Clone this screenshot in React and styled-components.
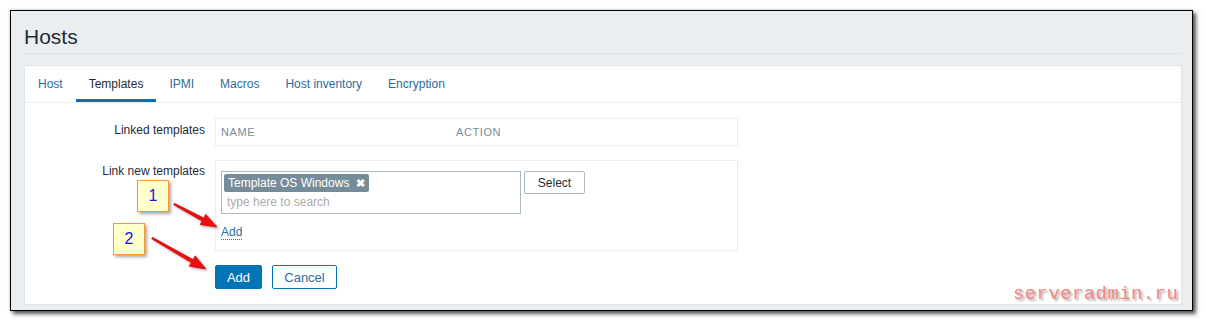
import React from 'react'
import styled, {createGlobalStyle} from 'styled-components'

const GlobalStyle = createGlobalStyle`
  body {
    margin: 0;
    background: #fff;
    font-family: 'Liberation Sans', Arial, sans-serif;
    font-size: 12px;
    color: #1f2c33;
  }
`

const Page = styled.div`
  position: relative;
  width: 1205px;
  height: 323px;
  overflow: hidden;
`

const Frame = styled.div`
  margin: 10px 0 0 10px;
  width: 1183px;
  box-sizing: border-box;
  background: #ebeef0;
  border: 1px solid #000;
  box-shadow: 3px 3px 4px rgba(0, 0, 0, 0.65), 0 0 3px rgba(0, 0, 0, 0.2);
  padding: 0 10px 5px 13px;
`

const Header = styled.h1`
  margin: 0;
  padding-top: 10px;
  font-size: 21px;
  line-height: 32px;
  font-weight: normal;
  color: #1f2c33;
  border-bottom: 1px solid #dde2e6;
`

const Panel = styled.div`
  margin-top: 11px;
  background: #fff;
  border: 1px solid #dfe4e7;
`

const TabBar = styled.div`
  display: flex;
  border-bottom: 1px solid #ebeef0;
`

const Tab = styled.div`
  height: 36px;
  line-height: 37px;
  padding: 0 13px;
  color: ${(p) => (p.$active ? '#1f2c33' : '#2c6c9c')};
  box-shadow: ${(p) => (p.$active ? 'inset 0 -3px 0 #0a6eb4' : 'none')};
`

const Form = styled.div`
  padding: 15px 0 15px;
  display: flex;
  flex-direction: column;
  gap: 14px;
`

const Row = styled.div`
  display: flex;
  align-items: flex-start;
`

const Label = styled.div`
  width: 180px;
  flex: none;
  text-align: right;
  line-height: 14px;
  padding-top: ${(p) => p.$top || 4}px;
  margin-right: 10px;
`

const Box = styled.div`
  width: 523px;
  box-sizing: border-box;
  border: 1px solid #ebeef0;
  padding: ${(p) => p.$pad || '0'};
`

const TableHead = styled.div`
  display: flex;
  height: 26px;
  align-items: center;
  padding: 0 5px;
  font-size: 11px;
  letter-spacing: 0.6px;
  color: #768d99;
`

const HeadCell = styled.div`
  width: ${(p) => p.$w}px;
`

const PickerRow = styled.div`
  display: flex;
  align-items: flex-start;
  gap: 3px;
`

const MultiSelect = styled.div`
  width: 300px;
  height: 43px;
  box-sizing: border-box;
  border: 1px solid #acbbc2;
  padding: 2px;
`

const Tag = styled.span`
  display: inline-flex;
  align-items: center;
  height: 18px;
  padding: 0 4px;
  border-radius: 2px;
  background: #768d99;
  color: #fff;
  font-size: 12px;
  gap: 7px;
`

const TagClose = styled.span`
  font-size: 11px;
  font-weight: bold;
`

const Placeholder = styled.div`
  padding: 3px 0 0 3px;
  color: #acacac;
  line-height: 14px;
`

const SelectButton = styled.button`
  height: 23px;
  width: 61px;
  padding: 0;
  border: 1px solid #acbbc2;
  border-radius: 2px;
  background: #fff;
  color: #1f2c33;
  font-family: inherit;
  font-size: 12px;
`

const AddLink = styled.span`
  display: inline-block;
  margin-top: 11px;
  line-height: 14px;
  color: #2c6c9c;
  border-bottom: 1px dotted #2c6c9c;
`

const Buttons = styled.div`
  display: flex;
  gap: 10px;
  padding-left: 190px;
`

const Button = styled.button`
  height: 24px;
  width: ${(p) => p.$w}px;
  padding: 0;
  border-radius: 2px;
  font-family: inherit;
  font-size: 13px;
  border: 1px solid #0275b8;
  background: ${(p) => (p.$primary ? '#0275b8' : '#fff')};
  color: ${(p) => (p.$primary ? '#fff' : '#2c6c9c')};
`

const Callout = styled.div`
  position: absolute;
  left: ${(p) => p.$x}px;
  top: ${(p) => p.$y}px;
  width: 30px;
  height: 30px;
  border: 1px solid #f29a3a;
  background: #ffffcc;
  box-shadow: 2px 2px 3px rgba(0, 0, 0, 0.35);
  display: flex;
  align-items: center;
  justify-content: center;
  color: #1414e6;
  font-size: 16px;
`

const Arrows = styled.svg`
  position: absolute;
  left: 0;
  top: 0;
  pointer-events: none;
`

const Watermark = styled.div`
  position: absolute;
  left: 1013px;
  top: 283px;
  font-family: 'Liberation Mono', 'DejaVu Sans Mono', monospace;
  font-size: 19px;
  letter-spacing: 0.4px;
  color: #f38585;
  text-shadow: 2px 2px 2px rgba(0, 0, 0, 0.3);
`

const tabs = ['Host', 'Templates', 'IPMI', 'Macros', 'Host inventory', 'Encryption']

function arrowPoints([tx, ty], [hx, hy]) {
  const dx = hx - tx
  const dy = hy - ty
  const len = Math.hypot(dx, dy)
  const ux = dx / len
  const uy = dy / len
  const nx = -uy
  const ny = ux
  const bx = hx - 16 * ux
  const by = hy - 16 * uy
  const pts = [
    [tx + 0.8 * nx, ty + 0.8 * ny],
    [bx + 1.8 * nx, by + 1.8 * ny],
    [bx + 6 * nx, by + 6 * ny],
    [hx, hy],
    [bx - 6 * nx, by - 6 * ny],
    [bx - 1.8 * nx, by - 1.8 * ny],
    [tx - 0.8 * nx, ty - 0.8 * ny],
  ]
  return pts.map((p) => p.map((v) => v.toFixed(1)).join(',')).join(' ')
}

const App = () => {
  return (
    <Page>
      <GlobalStyle />
      <Frame>
        <Header>Hosts</Header>
        <Panel>
          <TabBar>
            {tabs.map((t) => (
              <Tab key={t} $active={t === 'Templates'}>
                {t}
              </Tab>
            ))}
          </TabBar>
          <Form>
            <Row>
              <Label $top={5}>Linked templates</Label>
              <Box>
                <TableHead>
                  <HeadCell $w={235}>NAME</HeadCell>
                  <HeadCell $w={100}>ACTION</HeadCell>
                </TableHead>
              </Box>
            </Row>
            <Row>
              <Label $top={4}>Link new templates</Label>
              <Box $pad='10px 5px'>
                <PickerRow>
                  <MultiSelect>
                    <Tag>
                      Template OS Windows <TagClose>✖</TagClose>
                    </Tag>
                    <Placeholder>type here to search</Placeholder>
                  </MultiSelect>
                  <SelectButton>Select</SelectButton>
                </PickerRow>
                <AddLink>Add</AddLink>
              </Box>
            </Row>
            <Buttons>
              <Button $primary $w={47}>
                Add
              </Button>
              <Button $w={65}>Cancel</Button>
            </Buttons>
          </Form>
        </Panel>
      </Frame>

      <Arrows width='1205' height='323'>
        <defs>
          <filter id='sh' x='-20%' y='-20%' width='140%' height='140%'>
            <feDropShadow dx='1.5' dy='1.5' stdDeviation='1' floodOpacity='0.35' />
          </filter>
        </defs>
        <polygon
          points={arrowPoints([174, 204], [217, 227])}
          fill='#f01010'
          stroke='#c00000'
          strokeWidth='0.6'
          filter='url(#sh)'
        />
        <polygon
          points={arrowPoints([152, 238], [206, 269])}
          fill='#f01010'
          stroke='#c00000'
          strokeWidth='0.6'
          filter='url(#sh)'
        />
      </Arrows>
      <Callout $x={137} $y={180}>1</Callout>
      <Callout $x={113} $y={223}>2</Callout>
      <Watermark>serveradmin.ru</Watermark>
    </Page>
  )
}

export default App
